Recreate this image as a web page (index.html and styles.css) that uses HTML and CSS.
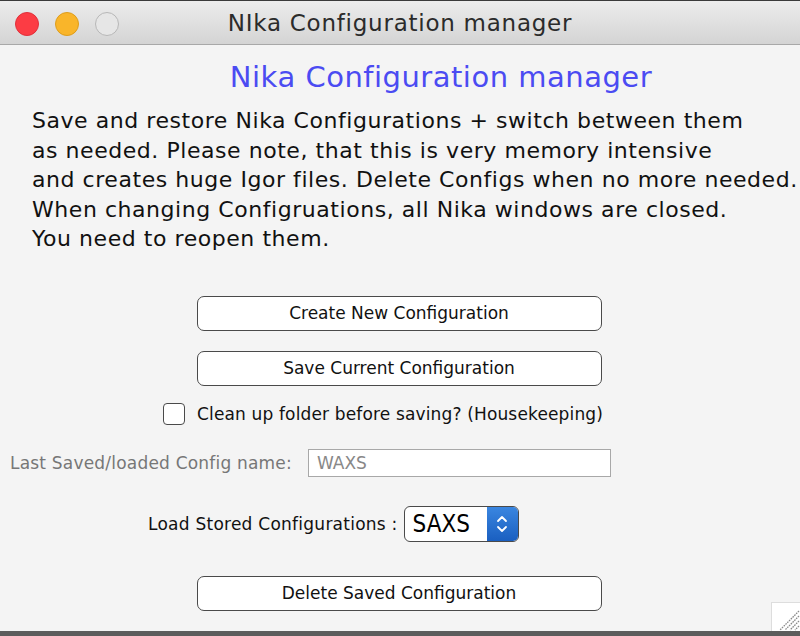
FILE: index.html
```html
<!DOCTYPE html>
<html>
<head>
<meta charset="utf-8">
<link rel="stylesheet" href="styles.css">
</head>
<body>
<div class="window">
  <div class="titlebar">
    <div class="lights">
      <span class="light red"></span>
      <span class="light yellow"></span>
      <span class="light gray"></span>
    </div>
    <div class="wintitle">NIka Configuration manager</div>
  </div>
  <div class="content">
    <h1 class="heading">Nika Configuration manager</h1>
    <p class="intro">Save and restore Nika Configurations + switch between them<br>as needed. Please note, that this is very memory intensive<br>and creates huge Igor files. Delete Configs when no more needed.<br>When changing Configruations, all Nika windows are closed.<br>You need to reopen them.</p>
    <div class="btnrow first"><button class="btn">Create New Configuration</button></div>
    <div class="btnrow second"><button class="btn">Save Current Configuration</button></div>
    <div class="checkrow"><span class="checkbox"></span><span class="checklabel">Clean up folder before saving? (Housekeeping)</span></div>
    <div class="namerow"><span class="namelabel">Last Saved/loaded Config name:</span><span class="namefield">WAXS</span></div>
    <div class="loadrow"><span class="loadlabel">Load Stored Configurations :</span>
      <span class="select"><span class="selval">SAXS</span><span class="selarrow"><svg width="14" height="22" viewBox="0 0 14 22"><path d="M3 8 L7 4 L11 8" fill="none" stroke="#fff" stroke-width="1.8" stroke-linecap="round" stroke-linejoin="round"/><path d="M3 14 L7 18 L11 14" fill="none" stroke="#fff" stroke-width="1.8" stroke-linecap="round" stroke-linejoin="round"/></svg></span></span>
    </div>
    <div class="btnrow third"><button class="btn">Delete Saved Configuration</button></div>
  </div>
  <div class="grip"><svg width="28" height="28" viewBox="0 0 28 28"><path d="M27 8 L8 27 M27 13 L13 27 M27 18 L18 27 M27 23 L23 27" stroke="#8a8a8a" stroke-width="1.3" stroke-dasharray="1.6 0.9"/></svg></div>
  <div class="bottombar"></div>
</div>
</body>
</html>
```
FILE: styles.css
```css
html, body {
  margin: 0;
  padding: 0;
  background: #f4f4f4;
}
.window {
  position: relative;
  width: 800px;
  height: 636px;
  overflow: hidden;
  background: #f4f4f4;
  display: flex;
  flex-direction: column;
  font-family: "DejaVu Sans", Verdana, sans-serif;
  color: #111;
}
.titlebar {
  height: 45px;
  border-top: 1px solid #3a3a3a;
  border-bottom: 1px solid #a8a8a8;
  background: linear-gradient(#ececec, #d4d4d4);
  display: flex;
  align-items: center;
  position: relative;
  flex: none;
  box-sizing: border-box;
  padding-top: 2px;
}
.lights {
  display: flex;
  gap: 16px;
  padding-left: 15px;
}
.light {
  width: 24px;
  height: 24px;
  border-radius: 50%;
  box-sizing: border-box;
}
.light.red { background: #fc3c44; border: 1px solid #e0303a; }
.light.yellow { background: #f9b52a; border: 1px solid #de9d1c; }
.light.gray { background: #e6e6e6; border: 1.5px solid #b7b7b7; }
.wintitle {
  position: absolute;
  left: 0;
  right: 0;
  top: 9px;
  text-align: center;
  font-size: 23px;
  letter-spacing: 0.75px;
  color: #2b2b2b;
}
.content {
  flex: 1;
  display: flex;
  flex-direction: column;
}
.heading {
  margin: 15px 0 0 0;
  padding-left: 82px;
  text-align: center;
  font-weight: normal;
  font-size: 29px;
  letter-spacing: 0.5px;
  line-height: 34px;
  color: #4b4bf2;
}
.intro {
  margin: 12px 0 0 32px;
  font-size: 22px;
  letter-spacing: 0.55px;
  line-height: 29.6px;
  color: #111;
}
.btnrow {
  display: flex;
  justify-content: center;
  padding-right: 2px;
}
.btnrow.first { margin-top: 42px; }
.btnrow.second { margin-top: 20px; }
.btnrow.third { margin-top: 34px; }
.btn {
  width: 405px;
  height: 35px;
  background: #fff;
  border: 1.5px solid #4a4a4a;
  border-radius: 7px;
  font-family: "DejaVu Sans", sans-serif;
  font-size: 17px;
  color: #111;
  padding: 0;
}
.checkrow {
  margin-top: 16px;
  padding-left: 163px;
  display: flex;
  align-items: center;
  gap: 12px;
  height: 24px;
}
.checkbox {
  width: 20px;
  height: 20px;
  border: 1.5px solid #4a4a4a;
  border-radius: 4px;
  background: #fff;
}
.checklabel {
  font-size: 17px;
  letter-spacing: 0.15px;
}
.namerow {
  margin-top: 23px;
  display: flex;
  align-items: center;
  padding-left: 10px;
  gap: 16px;
}
.namelabel {
  font-size: 17px;
  letter-spacing: 0.2px;
  color: #777;
}
.namefield {
  width: 293px;
  height: 26px;
  box-sizing: content-box;
  border: 1px solid #a8a8a8;
  background: #fff;
  padding-left: 8px;
  font-size: 17px;
  color: #888;
  line-height: 26px;
}
.loadrow {
  margin-top: 29px;
  display: flex;
  align-items: center;
  padding-left: 148px;
  gap: 6px;
}
.loadlabel {
  font-size: 17px;
  letter-spacing: 0.25px;
  color: #111;
}
.select {
  display: flex;
  width: 115px;
  height: 36px;
  box-sizing: border-box;
  border: 1px solid #4a4a4a;
  border-radius: 6px;
  overflow: hidden;
  background: #fff;
}
.selval {
  flex: 1;
  font-size: 24px;
  font-stretch: condensed;
  line-height: 34px;
  padding-left: 8px;
  color: #000;
}
.selarrow {
  width: 31px;
  background: linear-gradient(#3a86e0, #1a5fc0);
  display: flex;
  align-items: center;
  justify-content: center;
}
.grip {
  position: absolute;
  right: 0;
  bottom: 5px;
  width: 28px;
  height: 28px;
  background: #fff;
  border-left: 1px solid #ddd;
  border-top: 1px solid #ddd;
}
.bottombar {
  position: absolute;
  left: 0;
  right: 0;
  bottom: 0;
  height: 5px;
  background: #5c5c5c;
}
```
